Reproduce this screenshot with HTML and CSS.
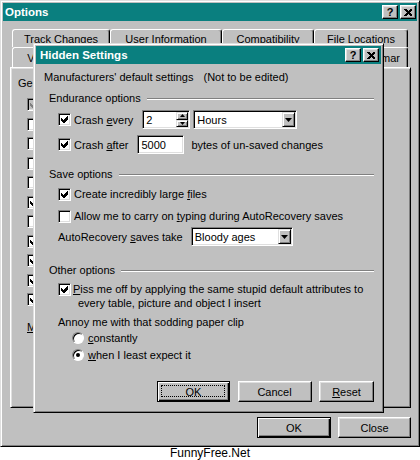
FILE: index.html
```html
<!DOCTYPE html>
<html>
<head>
<meta charset="utf-8">
<title>Options</title>
<link rel="stylesheet" href="styles.css">
</head>
<body>
<div class="win options">
  <div class="titlebar">
    <span class="title-text">Options</span>
    <span class="tbtns">
      <span class="tbtn">?</span>
      <span class="tbtn"><svg class="xglyph" viewBox="0 0 8 7" width="8" height="7"><path d="M0 0h2l2 2 2-2h2v1l-2.5 2.5 2.5 2.5v1h-2l-2-2-2 2h-2v-1l2.5-2.5-2.5-2.5z" fill="#000"/></svg></span>
    </span>
  </div>
  <div class="options-body">
    <div class="tabs">
      <div class="tabrow back">
        <div class="tab t1">Track Changes</div>
        <div class="tab t2">User Information</div>
        <div class="tab t3">Compatibility</div>
        <div class="tab t4">File Locations</div>
      </div>
      <div class="tabrow front">
        <div class="tab v1">View</div>
        <div class="tab v2 selected">General</div>
        <div class="tab v3">Edit</div>
        <div class="tab v4">Print</div>
        <div class="tab v5">Save</div>
        <div class="tab v6">Spelling &amp; Grammar</div>
      </div>
    </div>
    <div class="panel">
      <div class="panel-clip">
        <div class="gen-head">General options</div>
        <ul class="genlist">
          <li><span class="cb disabled"><svg viewBox="0 0 7 7" width="7" height="7"><polygon points="0,2 2,4 6,0 7,0 7,3 3,7 2,7 0,5"/></svg></span></li>
          <li><span class="cb"></span></li>
          <li><span class="cb"></span></li>
          <li><span class="cb"></span></li>
          <li><span class="cb"></span></li>
          <li><span class="cb"><svg viewBox="0 0 7 7" width="7" height="7"><polygon points="0,2 2,4 6,0 7,0 7,3 3,7 2,7 0,5"/></svg></span></li>
          <li><span class="cb"></span></li>
          <li><span class="cb"><svg viewBox="0 0 7 7" width="7" height="7"><polygon points="0,2 2,4 6,0 7,0 7,3 3,7 2,7 0,5"/></svg></span></li>
          <li><span class="cb"><svg viewBox="0 0 7 7" width="7" height="7"><polygon points="0,2 2,4 6,0 7,0 7,3 3,7 2,7 0,5"/></svg></span></li>
          <li><span class="cb"><svg viewBox="0 0 7 7" width="7" height="7"><polygon points="0,2 2,4 6,0 7,0 7,3 3,7 2,7 0,5"/></svg></span></li>
          <li><span class="cb"><svg viewBox="0 0 7 7" width="7" height="7"><polygon points="0,2 2,4 6,0 7,0 7,3 3,7 2,7 0,5"/></svg></span></li>
        </ul>
        <div class="units"><u>M</u>easurement units:</div>
      </div>
    </div>
    <div class="btnrow">
      <button class="btn default w74">OK</button>
      <button class="btn w73">Close</button>
    </div>
  </div>

  <div class="win dialog">
    <div class="titlebar">
      <span class="title-text">Hidden Settings</span>
      <span class="tbtns">
        <span class="tbtn">?</span>
        <span class="tbtn"><svg class="xglyph" viewBox="0 0 8 7" width="8" height="7"><path d="M0 0h2l2 2 2-2h2v1l-2.5 2.5 2.5 2.5v1h-2l-2-2-2 2h-2v-1l2.5-2.5-2.5-2.5z" fill="#000"/></svg></span>
      </span>
    </div>
    <div class="hs-body">
      <div class="intro"><span>Manufacturers' default settings</span><span>(Not to be edited)</span></div>

      <div class="ghead g-endur"><span>Endurance options</span><span class="line"></span></div>
      <div class="r crash1">
        <span class="cb"><svg viewBox="0 0 7 7" width="7" height="7"><polygon points="0,2 2,4 6,0 7,0 7,3 3,7 2,7 0,5"/></svg></span>
        <span>Crash <u>e</u>very</span>
        <span class="field spin"><span class="ftext">2</span><span class="spinbtns"><span class="sbtn"><svg viewBox="0 0 5 3" width="5" height="3"><polygon points="2.5,0 5,3 0,3"/></svg></span><span class="sbtn"><svg viewBox="0 0 5 3" width="5" height="3"><polygon points="0,0 5,0 2.5,3"/></svg></span></span></span>
        <span class="field combo hours"><span class="ftext">Hours</span><span class="ddbtn"><svg viewBox="0 0 7 4" width="7" height="4"><polygon points="0,0 7,0 3.5,4"/></svg></span></span>
      </div>
      <div class="r crash2">
        <span class="cb"><svg viewBox="0 0 7 7" width="7" height="7"><polygon points="0,2 2,4 6,0 7,0 7,3 3,7 2,7 0,5"/></svg></span>
        <span>Crash <u>a</u>fter</span>
        <span class="field bytes"><span class="ftext">5000</span></span>
        <span class="after">bytes of un-saved changes</span>
      </div>

      <div class="ghead g-save"><span>Save options</span><span class="line"></span></div>
      <div class="r create">
        <span class="cb"><svg viewBox="0 0 7 7" width="7" height="7"><polygon points="0,2 2,4 6,0 7,0 7,3 3,7 2,7 0,5"/></svg></span>
        <span>Create incredibly large <u>f</u>iles</span>
      </div>
      <div class="r allow">
        <span class="cb"></span>
        <span>Allow me to carry on <u>t</u>yping during AutoRecovery saves</span>
      </div>
      <div class="r autorec">
        <span>AutoRecovery <u>s</u>aves take</span>
        <span class="field combo bloody"><span class="ftext">Bloody ages</span><span class="ddbtn"><svg viewBox="0 0 7 4" width="7" height="4"><polygon points="0,0 7,0 3.5,4"/></svg></span></span>
      </div>

      <div class="ghead g-other"><span>Other options</span><span class="line"></span></div>
      <div class="r piss">
        <span class="cb"><svg viewBox="0 0 7 7" width="7" height="7"><polygon points="0,2 2,4 6,0 7,0 7,3 3,7 2,7 0,5"/></svg></span>
        <span class="multi"><span class="l1"><u>P</u>iss me off by applying the same stupid default attributes to</span><span class="l2">every table, picture and object I insert</span></span>
      </div>
      <div class="annoy">Annoy me with that sodding paper clip</div>
      <div class="rad rad1"><span class="rb"></span><span><u>c</u>onstantly</span></div>
      <div class="rad rad2"><span class="rb on"><span class="dot"></span></span><span><u>w</u>hen I least expect it</span></div>

      <div class="dbtns">
        <button class="btn default focus w73">OK</button>
        <button class="btn w74">Cancel</button>
        <button class="btn w55"><u>R</u>eset</button>
      </div>
    </div>
  </div>
</div>
<div class="footer">FunnyFree.Net</div>
</body>
</html>
```

FILE: styles.css
```css
* { box-sizing: border-box; }
html, body { margin: 0; padding: 0; background: #fff; }
body {
  width: 420px;
  height: 460px;
  overflow: hidden;
  font-family: "Liberation Sans", Arial, sans-serif;
  font-size: 11px;
  color: #000;
}
u { text-decoration: underline; text-underline-offset: 1px; }

.win {
  position: relative;
  background: #c0c0c0;
  border: 1px solid;
  border-color: #dfdfdf #000 #000 #dfdfdf;
  box-shadow: inset 1px 1px #fff, inset -1px -1px #808080;
  padding: 2px;
}
.options {
  width: 420px;
  height: 447px;
  display: flex;
  flex-direction: column;
}

.titlebar {
  height: 18px;
  flex: none;
  background: #0a7f7f;
  color: #fff;
  display: flex;
  align-items: center;
  justify-content: space-between;
  font-weight: bold;
  font-size: 11.5px;
  white-space: nowrap;
}
.options > .titlebar { padding: 0 1px 0 2px; }
.dialog > .titlebar { padding: 0 2px 0 4px; }
.tbtns { display: flex; gap: 2px; }
.tbtn {
  width: 16px;
  height: 14px;
  background: #c0c0c0;
  border: 1px solid;
  border-color: #fff #000 #000 #fff;
  box-shadow: inset -1px -1px #808080, inset 1px 1px #dfdfdf;
  display: flex;
  align-items: center;
  justify-content: center;
  color: #000;
  font-weight: bold;
  font-size: 11px;
  line-height: 1;
}
.xglyph { display: block; shape-rendering: crispEdges; }

/* Options body */
.options-body {
  padding: 8px 6px 0 7px;
  display: flex;
  flex-direction: column;
}
.tabs { padding: 0 2px; }
.tabrow { display: flex; }
.tabrow.back { height: 18px; }
.tabrow.front { height: 20px; }
.tab {
  flex: none;
  border: 1px solid;
  border-bottom: none;
  border-color: #fff #000 #000 #fff;
  box-shadow: inset -1px 0 #808080;
  border-radius: 3px 3px 0 0;
  display: flex;
  align-items: center;
  justify-content: center;
  white-space: nowrap;
  overflow: hidden;
}
.t1 { width: 98px; }
.t2 { width: 112px; }
.t3 { width: 92px; }
.t4 { width: 94px; }
.v1 { width: 54px; }
.v2 { width: 64px; }
.v3 { width: 54px; }
.v4 { width: 54px; }
.v5 { width: 55px; }
.v6 { width: 115px; }

.panel {
  height: 341px;
  flex: none;
  border: 1px solid;
  border-color: #fff #000 #000 #fff;
  box-shadow: inset 1px 1px #dfdfdf, inset -1px -1px #808080;
  padding: 8px 0 0 7px;
  overflow: hidden;
  white-space: nowrap;
}
.panel-clip {
  width: 15px;
  overflow: hidden;
}
.gen-head { line-height: 14px; height: 14px; }
.genlist {
  list-style: none;
  margin: 4.75px 0 0;
  padding: 0 0 0 9px;
}
.genlist li {
  height: 19.5px;
  display: flex;
  align-items: center;
}
.units {
  margin-top: 10.75px;
  line-height: 14px;
  padding-left: 9px;
}

.btnrow {
  margin-top: 9px;
  display: flex;
  justify-content: flex-end;
  gap: 7px;
}

/* Buttons */
.btn {
  position: relative;
  height: 21px;
  padding: 0;
  font: inherit;
  color: #000;
  background: #c0c0c0;
  border: 1px solid;
  border-color: #fff #000 #000 #fff;
  box-shadow: inset -1px -1px #808080, inset 1px 1px #dfdfdf;
  display: flex;
  align-items: center;
  justify-content: center;
}
.btn.default {
  border-color: #000;
  box-shadow: inset 1px 1px #fff, inset -1px -1px #000, inset -2px -2px #808080;
}
.btn.focus::after {
  content: "";
  position: absolute;
  left: 3px; top: 3px; right: 4px; bottom: 4px;
  border: 1px dotted #000;
}
.w73 { width: 73px; }
.w74 { width: 74px; }
.w55 { width: 55px; }

/* Checkbox / radio */
.cb {
  width: 13px;
  height: 13px;
  flex: none;
  background: #fff;
  border: 1px solid;
  border-color: #808080 #fff #fff #808080;
  box-shadow: inset 1px 1px #000, inset -1px -1px #dfdfdf;
  margin-right: 3px;
  display: flex;
  align-items: center;
  justify-content: center;
}
.cb svg { display: block; shape-rendering: crispEdges; fill: #000; }
.cb.disabled { background: #c0c0c0; }
.cb.disabled svg { fill: #808080; }

.rb {
  width: 12px;
  height: 12px;
  flex: none;
  border-radius: 50%;
  background: #fff;
  border: 1px solid;
  border-color: #808080 #fff #fff #808080;
  box-shadow: inset 1px 1px #000;
  margin-right: 4px;
  display: flex;
  align-items: center;
  justify-content: center;
}
.dot { width: 4px; height: 4px; border-radius: 50%; background: #000; }

/* Hidden Settings dialog */
.dialog {
  position: absolute;
  left: 32px;
  top: 42px;
  width: 351px;
  height: 370px;
}
.hs-body {
  padding: 0 7px 0 8px;
  white-space: nowrap;
}
.intro {
  margin-top: 6px;
  line-height: 14px;
  display: flex;
  gap: 10px;
}
.ghead {
  height: 14px;
  line-height: 14px;
  display: flex;
  align-items: center;
  padding-left: 5px;
}
.ghead .line {
  flex: 1;
  height: 2px;
  margin-left: 6px;
  margin-top: 2px;
  border-top: 1px solid #808080;
  border-bottom: 1px solid #fff;
}
.g-endur { margin-top: 7px; }
.g-save { margin-top: 13px; }
.g-other { margin-top: 17px; }

.r {
  display: flex;
  align-items: center;
  padding-left: 14px;
}
.crash1 { margin-top: 5px; height: 19px; }
.crash2 { margin-top: 6px; height: 19px; }
.create { margin-top: 6px; height: 14px; }
.allow { margin-top: 8px; height: 14px; }
.autorec { margin-top: 4px; height: 19px; }
.piss { margin-top: 5px; align-items: flex-start; }
.piss .cb { margin-top: 1px; margin-right: 2px; }
.multi { display: flex; flex-direction: column; line-height: 14px; }
.l2 { padding-left: 5px; }
.annoy { margin-top: 5px; line-height: 14px; padding-left: 14px; }
.rad {
  display: flex;
  align-items: center;
  height: 14px;
  padding-left: 28px;
}
.rad1 { margin-top: 2px; }
.rad2 { margin-top: 3px; }

.field {
  height: 19px;
  flex: none;
  background: #fff;
  border: 1px solid;
  border-color: #808080 #fff #fff #808080;
  box-shadow: inset 1px 1px #000, inset -1px -1px #dfdfdf;
  display: flex;
  align-items: center;
  padding-left: 3px;
}
.ftext { flex: 1; }
.spin { width: 48px; margin-left: 9px; }
.hours { width: 104px; margin-left: 3px; }
.bytes { width: 47px; margin-left: 9px; }
.after { margin-left: 7px; }
.bloody { width: 102px; margin-left: 8px; }

.spinbtns {
  width: 12px;
  height: 15px;
  margin-right: 1px;
  display: flex;
  flex-direction: column;
}
.sbtn, .ddbtn {
  background: #c0c0c0;
  border: 1px solid;
  border-color: #dfdfdf #000 #000 #dfdfdf;
  box-shadow: inset 1px 1px #fff, inset -1px -1px #808080;
  display: flex;
  align-items: center;
  justify-content: center;
}
.sbtn { height: 7.5px; }
.sbtn svg, .ddbtn svg { display: block; fill: #000; }
.ddbtn {
  width: 13px;
  height: 15px;
  margin-right: 1px;
}

.dbtns {
  margin-top: 19px;
  display: flex;
  justify-content: flex-end;
  gap: 7.5px;
}

.footer {
  height: 13px;
  line-height: 13px;
  text-align: center;
  font-size: 12px;
}
```
